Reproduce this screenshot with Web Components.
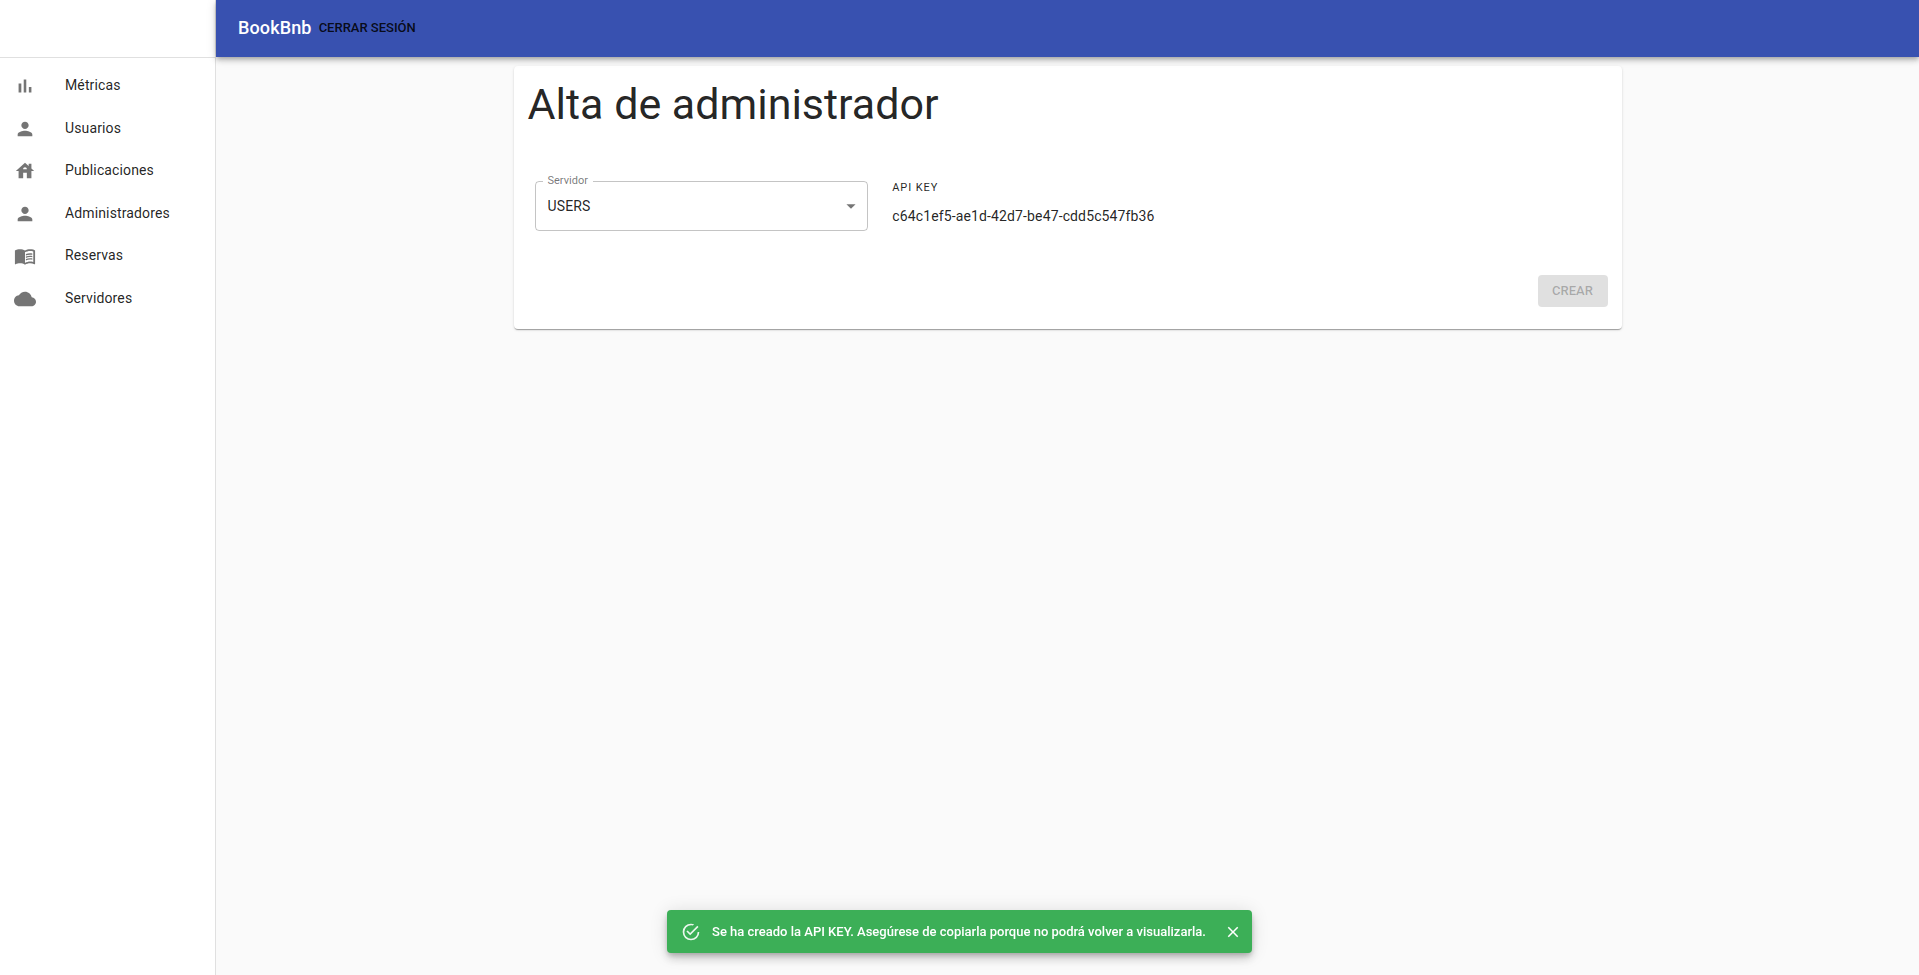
<!DOCTYPE html>
<html lang="es">
<head>
<meta charset="utf-8">
<meta name="viewport" content="width=device-width, initial-scale=1">
<title>BookBnb</title>
<style>
  body {
    margin: 0;
    background: #fafafa;
    color: rgba(0, 0, 0, 0.87);
    font: 400 14px/22px Roboto, "Liberation Sans", sans-serif;
    --primary: #3851b0;
    --success: #3caf57;
  }
</style>
</head>
<body>
<admin-shell>
  <nav-list slot="nav">
    <nav-item icon="chart" href="#metricas">Métricas</nav-item>
    <nav-item icon="person" href="#usuarios">Usuarios</nav-item>
    <nav-item icon="house" href="#publicaciones">Publicaciones</nav-item>
    <nav-item icon="person" href="#administradores">Administradores</nav-item>
    <nav-item icon="book" href="#reservas">Reservas</nav-item>
    <nav-item icon="cloud" href="#servidores">Servidores</nav-item>
  </nav-list>
  <top-bar slot="bar" action="Cerrar sesión">BookBnb</top-bar>
  <form-card heading="Alta de administrador">
    <outlined-select label="Servidor" options="USERS"></outlined-select>
    <key-value label="API KEY">c64c1ef5-ae1d-42d7-be47-cdd5c547fb36</key-value>
    <submit-button slot="actions" disabled>Crear</submit-button>
  </form-card>
</admin-shell>
<snack-bar>Se ha creado la API KEY. Asegúrese de copiarla porque no podrá volver a visualizarla.</snack-bar>

<script>
const define = (name, render, setup) => customElements.define(name, class extends HTMLElement {
  connectedCallback() {
    if (this.shadowRoot) return;
    const root = this.attachShadow({ mode: 'open' });
    root.innerHTML = render(this);
    if (setup) setup(root, this);
  }
});

const icons = {
  chart: 'M5 9.2h3V19H5zM10.6 5h2.8v14h-2.8zm5.6 8H19v6h-2.8z',
  person: 'M12 12c2.21 0 4-1.79 4-4s-1.79-4-4-4-4 1.79-4 4 1.79 4 4 4zm0 2c-2.67 0-8 1.34-8 4v2h16v-2c0-2.66-5.33-4-8-4z',
  house: 'M19 9.3V4h-3v2.6L12 3 2 12h3v8h5v-6h4v6h5v-8h3l-3-2.7zm-9 .7c0-1.1.9-2 2-2s2 .9 2 2h-4z',
  book: 'M21 5c-1.11-.35-2.33-.5-3.5-.5-1.95 0-4.05.4-5.5 1.5-1.45-1.1-3.55-1.5-5.5-1.5S2.45 4.9 1 6v14.65c0 .25.25.5.5.5.1 0 .15-.05.25-.05C3.1 20.45 5.05 20 6.5 20c1.95 0 4.05.4 5.5 1.5 1.35-.85 3.8-1.5 5.5-1.5 1.65 0 3.35.3 4.75 1.05.1.05.15.05.25.05.25 0 .5-.25.5-.5V6c-.6-.45-1.25-.75-2-1zm0 13.5c-1.1-.35-2.3-.5-3.5-.5-1.7 0-4.15.65-5.5 1.5V8c1.35-.85 3.8-1.5 5.5-1.5 1.2 0 2.4.15 3.5.5v11.5zM17.5 10.5c.88 0 1.73.09 2.5.26V9.24c-.79-.15-1.64-.24-2.5-.24-1.7 0-3.24.29-4.5.83v1.66c1.13-.64 2.7-.99 4.5-.99zM13 12.49v1.66c1.13-.64 2.7-.99 4.5-.99.88 0 1.73.09 2.5.26V11.9c-.79-.15-1.64-.24-2.5-.24-1.7 0-3.24.3-4.5.83zM17.5 14.33c-1.7 0-3.24.29-4.5.83v1.66c1.13-.64 2.7-.99 4.5-.99.88 0 1.73.09 2.5.26v-1.52c-.79-.16-1.64-.24-2.5-.24z',
  cloud: 'M19.35 10.04C18.67 6.59 15.64 4 12 4 9.11 4 6.6 5.64 5.35 8.04 2.34 8.36 0 10.91 0 14c0 3.31 2.69 6 6 6h13c2.76 0 5-2.24 5-5 0-2.64-2.05-4.78-4.65-4.96z',
  dropdown: 'M7 10l5 5 5-5z',
  success: 'M20,12A8,8 0 0,1 12,20A8,8 0 0,1 4,12A8,8 0 0,1 12,4C12.76,4 13.5,4.11 14.2,4.31L15.77,2.74C14.61,2.26 13.34,2 12,2A10,10 0 0,0 2,12A10,10 0 0,0 12,22A10,10 0 0,0 22,12M7.91,10.08L6.5,11.5L11,16L21,6L19.59,4.58L11,13.17L7.91,10.08Z',
  close: 'M19 6.41L17.59 5 12 10.59 6.41 5 5 6.41 10.59 12 5 17.59 6.41 19 12 13.41 17.59 19 19 17.59 13.41 12z'
};

define('md-icon', el => `
  <style>
    :host { display: block; flex: none; width: 22px; height: 22px; }
    svg { display: block; width: 100%; height: 100%; fill: currentColor; }
  </style>
  <svg viewBox="0 0 24 24" aria-hidden="true"><path d="${icons[el.getAttribute('name')]}"/></svg>`);

define('admin-shell', () => `
  <style>
    :host { display: grid; grid-template-columns: 216px minmax(0, 1fr); min-height: 100vh; }
    aside { background: #fff; border-right: 1px solid #e0e0e0; }
    .brand { height: 57px; border-bottom: 1px solid #e0e0e0; }
    .page { display: flex; flex-direction: column; }
    main { width: 100%; max-width: 1152px; margin: 0 auto; padding: 9px 22px; box-sizing: border-box; }
  </style>
  <aside><div class="brand"></div><slot name="nav"></slot></aside>
  <div class="page"><slot name="bar"></slot><main><slot></slot></main></div>`);

define('nav-list', () => `
  <style>
    :host { display: block; padding: 7px 0; }
    nav { display: grid; grid-auto-rows: 1fr; height: 255px; }
  </style>
  <nav aria-label="Principal"><slot></slot></nav>`);

define('nav-item', el => `
  <style>
    :host { display: grid; }
    a { display: flex; align-items: center; gap: 29px; padding: 0 14px;
        color: inherit; text-decoration: none; letter-spacing: 0.00938em; }
    a:hover { background: rgba(0, 0, 0, 0.04); }
    md-icon { color: rgba(0, 0, 0, 0.54); }
    span { padding-bottom: 2px; }
  </style>
  <a href="${el.getAttribute('href')}"><md-icon name="${el.getAttribute('icon')}"></md-icon><span><slot></slot></span></a>`);

define('top-bar', el => `
  <style>
    :host { display: block; position: relative; }
    header { display: flex; align-items: center; box-sizing: border-box; height: 57px; padding: 0 22px 2px; background: var(--primary);
      box-shadow: 0 2px 4px -1px rgba(0,0,0,.2), 0 4px 5px 0 rgba(0,0,0,.14), 0 1px 10px 0 rgba(0,0,0,.12); }
    strong { color: #fff; font-size: 18px; font-weight: 500; letter-spacing: 0.0075em; }
    button { border: 0; background: none; padding: 5px 7px; cursor: pointer; color: rgba(0,0,0,.87);
      font: 500 13px/22px Roboto, sans-serif; text-transform: uppercase; }
  </style>
  <header><strong><slot></slot></strong><button type="button">${el.getAttribute('action')}</button></header>`);

define('form-card', el => `
  <style>
    :host { display: block; }
    form { padding: 13px 14px 22px; background: #fff; border-radius: 4px;
      box-shadow: 0 2px 1px -1px rgba(0,0,0,.2), 0 1px 1px 0 rgba(0,0,0,.14), 0 1px 3px 0 rgba(0,0,0,.12); }
    h1 { margin: 0; font-size: 43px; line-height: 50px; font-weight: 400; }
    .fields { display: grid; grid-template-columns: 7fr 15fr; gap: 24px; align-items: start; padding: 45px 0 43px 7px; }
    .actions { display: flex; justify-content: flex-end; }
  </style>
  <form>
    <h1>${el.getAttribute('heading')}</h1>
    <div class="fields"><slot></slot></div>
    <div class="actions"><slot name="actions"></slot></div>
  </form>`,
  root => root.querySelector('form').addEventListener('submit', e => e.preventDefault()));

define('outlined-select', el => `
  <style>
    :host { display: block; }
    .field { position: relative; height: 57px; }
    .outline { position: absolute; inset: 0; margin: 0; padding: 0 7px; min-width: 0;
      border: 1px solid rgba(0,0,0,.23); border-radius: 4px; pointer-events: none; }
    legend { padding: 0 5px; height: 14px; font-size: 11px; line-height: 14px; color: rgba(0,0,0,.54); }
    select { position: absolute; inset: 7px 0 0; width: 100%; height: 50px; padding: 0 32px 0 13px; border: 0; background: none;
      appearance: none; color: inherit; font: inherit; letter-spacing: 0.00938em; cursor: pointer; outline: 0; }
    md-icon { position: absolute; right: 6px; top: 21px; color: rgba(0,0,0,.54); pointer-events: none; }
  </style>
  <div class="field">
    <select id="choice">${el.getAttribute('options').split(',').map(o => `<option>${o}</option>`).join('')}</select>
    <md-icon name="dropdown"></md-icon>
    <fieldset class="outline"><legend><label for="choice">${el.getAttribute('label')}</label></legend></fieldset>
  </div>`);

define('key-value', el => `
  <style>
    :host { display: block; }
    .label { font-size: 11px; line-height: 27px; letter-spacing: 0.08333em; }
    .value { line-height: 31px; letter-spacing: 0.00938em; overflow-wrap: anywhere; }
  </style>
  <div class="label">${el.getAttribute('label')}</div>
  <div class="value"><slot></slot></div>`);

define('submit-button', el => `
  <style>
    :host { display: block; }
    button { display: block; min-width: 70px; height: 32px; padding: 0 14px; border: 0; border-radius: 4px; background: var(--primary); color: #fff;
      font: 500 13px/22px Roboto, sans-serif; text-transform: uppercase; }
    button:disabled { background: rgba(0,0,0,.12); color: rgba(0,0,0,.26); }
  </style>
  <button type="submit" ${el.hasAttribute('disabled') ? 'disabled' : ''}><slot></slot></button>`);

define('snack-bar', () => `
  <style>
    :host { position: fixed; left: 0; right: 0; bottom: 22px; display: flex; justify-content: center; pointer-events: none; }
    .alert { display: flex; align-items: center; box-sizing: border-box; min-height: 43px; padding: 5px 14px; border-radius: 4px;
      background: var(--success); color: #fff; font-size: 13px; line-height: 18px; font-weight: 500; pointer-events: auto;
      box-shadow: 0 3px 5px -1px rgba(0,0,0,.2), 0 6px 10px 0 rgba(0,0,0,.14), 0 1px 18px 0 rgba(0,0,0,.12); }
    .mark { width: 20px; height: 20px; margin-right: 11px; opacity: .9; }
    button { margin: 0 -8px 0 14px; padding: 4px; border: 0; background: none; color: inherit; cursor: pointer; }
    button md-icon { width: 18px; height: 18px; }
  </style>
  <div class="alert" role="alert">
    <md-icon class="mark" name="success"></md-icon>
    <span><slot></slot></span>
    <button type="button" aria-label="Cerrar" title="Cerrar"><md-icon name="close"></md-icon></button>
  </div>`,
  (root, el) => root.querySelector('button').addEventListener('click', () => el.remove()));
</script>
</body>
</html>
